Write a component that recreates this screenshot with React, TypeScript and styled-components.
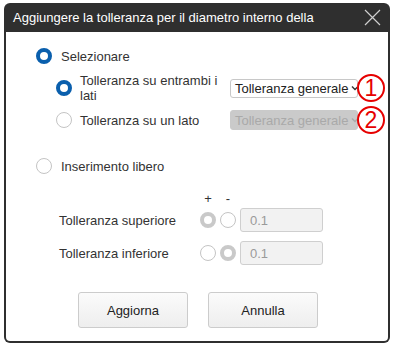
import React from "react";
import styled, { createGlobalStyle, css } from "styled-components";

const Global = createGlobalStyle`
  html, body { margin: 0; padding: 0; background: #ffffff; }
  body { font-family: "Liberation Sans", Arial, sans-serif; }
  * { box-sizing: border-box; }
`;

const Page = styled.div`
  padding: 3px 0 0 4px;
`;

const Dialog = styled.div`
  width: 386px;
  height: 340px;
  background: #2f2f2f;
  border-radius: 6px;
  padding: 0 2px 2px 2px;
  display: flex;
  flex-direction: column;
`;

const TitleBar = styled.div`
  height: 29px;
  display: flex;
  align-items: center;
  justify-content: space-between;
  padding: 0 6px 0 7px;
  color: #ffffff;
  font-size: 13px;
`;

const Title = styled.span`
  white-space: nowrap;
`;

const Close = styled.button`
  border: 0;
  background: transparent;
  padding: 0;
  width: 20px;
  height: 20px;
  display: flex;
  align-items: center;
  justify-content: center;
`;

const Body = styled.div`
  flex: 1;
  background: #ffffff;
  border-radius: 0 0 4px 4px;
  padding: 14px 0 0 30px;
  color: #333333;
  font-size: 13px;
  display: flex;
  flex-direction: column;
`;

type RadioKind = "off" | "on" | "grey";

const Radio = styled.span<{ $kind: RadioKind }>`
  width: 16px;
  height: 16px;
  border-radius: 50%;
  flex: none;
  background: #ffffff;
  ${(p) =>
    p.$kind === "on"
      ? css`border: 4px solid #0a5fad;`
      : p.$kind === "grey"
      ? css`border: 4px solid #c9c9c9;`
      : css`border: 1px solid #c4c4c4;`}
`;

const OptionRow = styled.div`
  display: flex;
  align-items: center;
  gap: 9px;
  height: 20px;
`;

const SubList = styled.div`
  display: flex;
  flex-direction: column;
  gap: 7px;
  margin: 7px 0 0 20px;
`;

const SubRow = styled.div`
  display: grid;
  grid-template-columns: 16px 150px auto;
  column-gap: 8px;
  align-items: center;
  min-height: 20px;
`;

const SubText = styled.span`
  line-height: 15px;
`;

const SelectWrap = styled.div`
  position: relative;
  width: 128px;
`;

const Select = styled.div<{ $disabled?: boolean }>`
  height: ${(p) => (p.$disabled ? 20 : 19)}px;
  width: 128px;
  border-radius: 3px;
  border: 1px solid ${(p) => (p.$disabled ? "#cacaca" : "#c8c8c8")};
  background: ${(p) => (p.$disabled ? "#cacaca" : "#ffffff")};
  color: ${(p) => (p.$disabled ? "#a9a9a9" : "#222222")};
  display: flex;
  align-items: center;
  padding-left: 4px;
  gap: 3px;
  white-space: nowrap;
  overflow: hidden;
  font-size: 13px;
  margin-left: -8px;
`;

const Badge = styled.span`
  position: absolute;
  left: 119px;
  top: 50%;
  width: 28px;
  height: 28px;
  margin-top: -14px;
  border-radius: 50%;
  border: 2px solid #e60000;
  background: #ffffff;
  color: #e60000;
  font-size: 23px;
  line-height: 24px;
  text-align: center;
`;

const FreeRow = styled(OptionRow)`
  margin-top: 26px;
`;

const FreeGrid = styled.div`
  display: grid;
  grid-template-columns: 137px 16px 16px 83px;
  column-gap: 4px;
  align-items: center;
  margin: 16px 0 0 23px;
`;

const SignLabel = styled.span`
  text-align: center;
  font-size: 13px;
  line-height: 14px;
  color: #333333;
`;

const FieldLabel = styled.span`
  color: #333333;
`;

const Input = styled.div<{ $gapTop: number }>`
  height: 24px;
  margin-top: ${(p) => p.$gapTop}px;
  border: 1px solid #cfcfcf;
  border-radius: 3px;
  background: #f2f2f2;
  color: #9a9a9a;
  display: flex;
  align-items: center;
  padding-left: 9px;
`;

const RowCell = styled.div<{ $gapTop: number }>`
  margin-top: ${(p) => p.$gapTop}px;
  display: flex;
  align-items: center;
`;

const Buttons = styled.div`
  display: flex;
  gap: 20px;
  margin: 27px 0 0 42px;
`;

const Button = styled.button`
  width: 110px;
  height: 36px;
  border: 1px solid #cccccc;
  border-radius: 3px;
  background: linear-gradient(#fbfbfb, #eeeeee);
  color: #222222;
  font-family: "Liberation Sans", Arial, sans-serif;
  font-size: 13px;
  padding: 0;
`;

const Chevron = ({ color }: { color: string }) => (
  <svg width="8" height="6" viewBox="0 0 8 6" style={{ flex: "none" }}>
    <path d="M1 1.5 L4 4.5 L7 1.5" fill="none" stroke={color} strokeWidth="1.4" />
  </svg>
);

export default function App() {
  return (
    <Page>
      <Global />
      <Dialog>
        <TitleBar>
          <Title>Aggiungere la tolleranza per il diametro interno della</Title>
          <Close aria-label="close">
            <svg width="17" height="17" viewBox="0 0 17 17">
              <path d="M1 1 L16 16 M16 1 L1 16" stroke="#cfcfcf" strokeWidth="1.2" />
            </svg>
          </Close>
        </TitleBar>
        <Body>
          <OptionRow>
            <Radio $kind="on" />
            <span>Selezionare</span>
          </OptionRow>
          <SubList>
            <SubRow>
              <Radio $kind="on" />
              <SubText>Tolleranza su entrambi i lati</SubText>
              <SelectWrap>
                <Select>
                  Tolleranza generale <Chevron color="#333" />
                </Select>
                <Badge>1</Badge>
              </SelectWrap>
            </SubRow>
            <SubRow>
              <Radio $kind="off" />
              <SubText>Tolleranza su un lato</SubText>
              <SelectWrap>
                <Select $disabled>
                  Tolleranza generale <Chevron color="#aaa" />
                </Select>
                <Badge>2</Badge>
              </SelectWrap>
            </SubRow>
          </SubList>
          <FreeRow>
            <Radio $kind="off" />
            <span>Inserimento libero</span>
          </FreeRow>
          <FreeGrid>
            <span />
            <SignLabel>+</SignLabel>
            <SignLabel>-</SignLabel>
            <span />
            <RowCell $gapTop={2}><FieldLabel>Tolleranza superiore</FieldLabel></RowCell>
            <RowCell $gapTop={2}><Radio $kind="grey" /></RowCell>
            <RowCell $gapTop={2}><Radio $kind="off" /></RowCell>
            <Input $gapTop={2}>0.1</Input>
            <RowCell $gapTop={9}><FieldLabel>Tolleranza inferiore</FieldLabel></RowCell>
            <RowCell $gapTop={9}><Radio $kind="off" /></RowCell>
            <RowCell $gapTop={9}><Radio $kind="grey" /></RowCell>
            <Input $gapTop={9}>0.1</Input>
          </FreeGrid>
          <Buttons>
            <Button>Aggiorna</Button>
            <Button>Annulla</Button>
          </Buttons>
        </Body>
      </Dialog>
    </Page>
  );
}
